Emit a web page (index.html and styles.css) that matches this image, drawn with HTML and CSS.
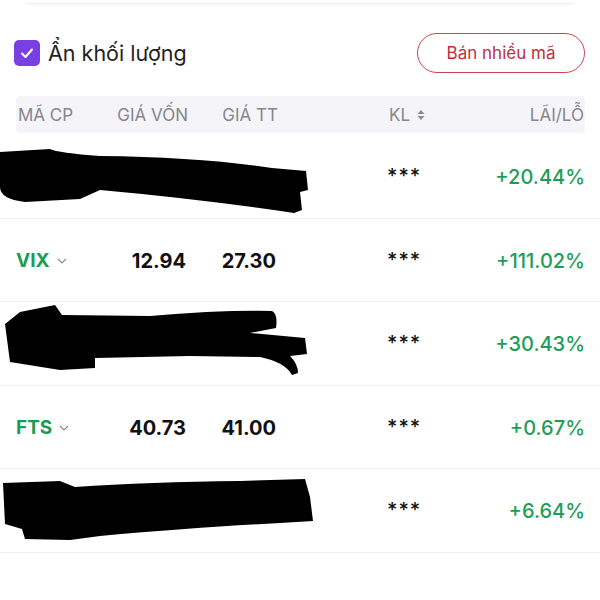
FILE: index.html
```html
<!DOCTYPE html>
<html lang="vi">
<head>
<meta charset="utf-8">
<link rel="stylesheet" href="styles.css">
</head>
<body>
<div class="topcard"></div>
<div class="toolbar">
  <label class="check">
    <span class="box"><svg width="16" height="16" viewBox="0 0 16 16"><polyline points="3,8.5 6.5,12 13,4.5" fill="none" stroke="#fff" stroke-width="2" stroke-linecap="round" stroke-linejoin="round"/></svg></span>
    <span class="check-label">Ẩn khối lượng</span>
  </label>
  <button class="sell">Bán nhiều mã</button>
</div>
<div class="thead">
  <span>MÃ CP</span>
  <span class="r">GIÁ VỐN</span>
  <span class="r">GIÁ TT</span>
  <span class="kl">KL <svg width="8" height="12" viewBox="0 0 8 12"><path d="M4 1 L7.5 5 H0.5 Z M4 11 L7.5 7 H0.5 Z" fill="#8a8a90"/></svg></span>
  <span class="r">LÃI/LỖ</span>
</div>
<div class="rows">
  <div class="row">
    <span class="code">ABC</span><span class="num">10.00</span><span class="num">12.04</span><span class="kl stars">***</span><span class="pct">+20.44%</span>
    <svg class="redact" width="320" height="84" viewBox="0 0 320 84"><path d="M0,17 L50,14 Q58,18 100,21 Q200,22 272,33 L306,36 L308,55 L300,57 L302,75 L294,78 Q200,64 100,55 L80,64 L25,67 Q0,64 0,52 Z" fill="#000"/></svg>
  </div>
  <div class="row">
    <span class="code">VIX <svg class="chev" width="10" height="6" viewBox="0 0 10 6"><polyline points="1,1 5,5 9,1" fill="none" stroke="#8a8a90" stroke-width="1.2"/></svg></span><span class="num">12.94</span><span class="num">27.30</span><span class="kl stars">***</span><span class="pct">+111.02%</span>
  </div>
  <div class="row">
    <span class="code">ABC</span><span class="num">10.00</span><span class="num">13.04</span><span class="kl stars">***</span><span class="pct">+30.43%</span>
    <svg class="redact" width="320" height="84" viewBox="0 0 320 84"><path d="M5,22 L20,10 L55,3 L62,13 L150,14 Q220,8 272,9 Q278,12 276,26 L250,31 L305,36 L307,52 L290,54 Q298,62 298,71 L292,73 Q285,60 260,55 L190,54 L95,56 L95,66 L60,68 L10,60 Z" fill="#000"/></svg>
  </div>
  <div class="row">
    <span class="code">FTS <svg class="chev" width="10" height="6" viewBox="0 0 10 6"><polyline points="1,1 5,5 9,1" fill="none" stroke="#8a8a90" stroke-width="1.2"/></svg></span><span class="num">40.73</span><span class="num">41.00</span><span class="kl stars">***</span><span class="pct">+0.67%</span>
  </div>
  <div class="row">
    <span class="code">ABC</span><span class="num">10.00</span><span class="num">10.66</span><span class="kl stars">***</span><span class="pct">+6.64%</span>
    <svg class="redact" width="320" height="84" viewBox="0 0 320 84"><path d="M3,14 L60,12 L75,18 Q150,13 240,12 L305,10 L310,28 L313,52 L280,54 Q200,58 100,67 L70,71 L25,70 L22,60 L5,55 Z" fill="#000"/></svg>
  </div>
</div>
</body>
</html>
```
FILE: styles.css
```css
* { box-sizing: border-box; }
body {
  margin: 0;
  background: #fff;
  font-family: Inter, Roboto, "Liberation Sans", sans-serif;
  color: #111;
  width: 600px;
}
.topcard {
  height: 4px;
  margin: 0 25px;
  border-bottom: 1px solid #efeff1;
  border-radius: 0 0 8px 8px;
  box-shadow: 0 1px 2px rgba(0,0,0,0.03);
}
.toolbar {
  display: flex;
  justify-content: space-between;
  align-items: center;
  margin-top: 29px;
  padding: 0 15px 0 14px;
  height: 40px;
}
.check {
  display: flex;
  align-items: center;
  gap: 8px;
}
.box {
  width: 26px;
  height: 26px;
  border-radius: 5px;
  background: #7a3fe0;
  display: flex;
  align-items: center;
  justify-content: center;
}
.check-label {
  font-size: 21.5px;
  color: #1f1f1f;
}
.sell {
  height: 40px;
  width: 168px;
  border: 1.5px solid #c94750;
  border-radius: 20px;
  background: #fff;
  color: #c0303c;
  font-family: Inter, Roboto, "Liberation Sans", sans-serif;
  font-size: 17px;
  padding: 0;
}
.thead {
  margin: 23px 15px 0 16px;
  height: 37px;
  background: #f5f5f9;
  border-radius: 4px;
  display: grid;
  grid-template-columns: 98px 72px 90px 191px 1fr;
  align-items: center;
  padding: 0 1px 0 2px;
  font-size: 17px;
  color: #86868c;
}
.thead .r { text-align: right; }
.thead .kl { padding-left: 111px; display: flex; align-items: center; gap: 7px; }
.rows { margin-top: 2px; }
.row {
  position: relative;
  height: 83.5px;
  border-bottom: 1px solid #f0f0f2;
  display: grid;
  grid-template-columns: 100px 70px 90px 191px 1fr;
  align-items: center;
  padding: 2px 15px 0 16px;
}
.code {
  color: #1b9c52;
  font-weight: 700;
  font-size: 19px;
  display: flex;
  align-items: center;
  gap: 7px;
}
.chev { margin-top: 1px; }
.num {
  text-align: right;
  font-weight: 700;
  font-size: 20px;
  color: #111;
}
.stars {
  padding-left: 111px;
  font-size: 20px;
  font-weight: 500;
  color: #111;
  margin-top: -2px;
  letter-spacing: 1px;
}
.pct {
  text-align: right;
  color: #1f9d58;
  font-weight: 550;
  font-size: 20px;
}
.redact {
  position: absolute;
  left: 0;
  top: 0;
}
```
